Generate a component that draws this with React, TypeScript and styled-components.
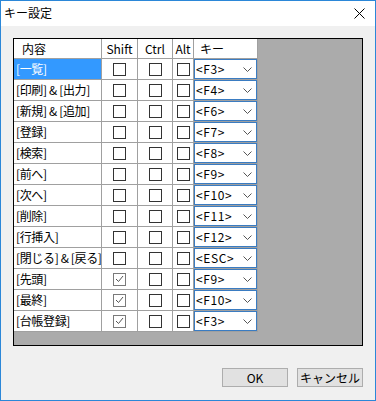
import React from 'react';
import styled, { createGlobalStyle } from 'styled-components';

const GlobalStyle = createGlobalStyle`
  body {
    margin: 0;
    font-family: "Noto Sans CJK JP", "Noto Sans", sans-serif;
    font-size: 12px;
    color: #000;
  }
`;

const Window = styled.div`
  box-sizing: border-box;
  width: 376px;
  height: 401px;
  border: 1px solid #2b87d8;
  background-color: #f0f0f0;
  display: flex;
  flex-direction: column;
`;

const TitleBar = styled.div`
  height: 25px;
  flex-shrink: 0;
  display: flex;
  align-items: center;
  justify-content: space-between;
  padding: 0 10px 0 3px;
  background-color: white;
  .title-text {
    font-size: 12px;
    line-height: 1;
    margin-top: -1px;
  }
  .close-icon {
    display: block;
  }
`;

const Body = styled.div`
  display: flex;
  flex-direction: column;
  padding: 12px 12px 0 12px;
`;

const GridFrame = styled.div`
  box-sizing: border-box;
  height: 308px;
  border: 1px solid #000;
  background-color: #ababab;
`;

const Table = styled.div`
  display: grid;
  grid-template-columns: 88px 36px 35px 21px 64px;
  width: 244px;
`;

const HeaderCell = styled.div<{ $align?: string; $pad?: number }>`
  box-sizing: border-box;
  height: 20px;
  display: flex;
  align-items: center;
  justify-content: ${(p) => p.$align || 'flex-start'};
  padding-left: ${(p) => p.$pad ?? 0}px;
  background-color: white;
  border-right: 1px solid #a0a0a0;
  border-bottom: 1px solid #a0a0a0;
  white-space: nowrap;
  overflow: hidden;
  line-height: 1;
`;

const Cell = styled.div<{ $selected?: boolean; $center?: boolean }>`
  box-sizing: border-box;
  height: 21px;
  display: flex;
  align-items: center;
  justify-content: ${(p) => (p.$center ? 'center' : 'flex-start')};
  padding-left: ${(p) => (p.$center ? 0 : 2)}px;
  background-color: ${(p) => (p.$selected ? '#3399ff' : 'white')};
  color: ${(p) => (p.$selected ? 'white' : '#000')};
  border-right: 1px solid #a0a0a0;
  border-bottom: 1px solid #a0a0a0;
  white-space: nowrap;
  overflow: hidden;
  line-height: 1;
  letter-spacing: -0.35px;
`;

const CheckBox = styled.span<{ $checked?: boolean }>`
  box-sizing: border-box;
  width: 13px;
  height: 13px;
  display: flex;
  align-items: center;
  justify-content: center;
  border: 1px solid ${(p) => (p.$checked ? '#7a7a7a' : '#333')};
  background-color: white;
`;

const Combo = styled.div`
  box-sizing: border-box;
  width: 100%;
  height: 100%;
  display: flex;
  align-items: center;
  justify-content: space-between;
  padding: 0 4px 0 1px;
  border: 1px solid #3a7cc2;
  background-color: white;
  .combo-text {
    letter-spacing: 0.6px;
    line-height: 1;
  }
  .combo-chevron {
    display: block;
  }
`;

const ComboCell = styled.div`
  box-sizing: border-box;
  height: 21px;
  background-color: white;
  border-right: 1px solid #a0a0a0;
  border-bottom: 1px solid #a0a0a0;
`;

const Footer = styled.div`
  display: flex;
  justify-content: flex-end;
  gap: 9px;
  margin-top: 22px;
`;

const Button = styled.button`
  box-sizing: border-box;
  width: 66px;
  height: 19px;
  padding: 0;
  border: 1px solid #adadad;
  background-color: #e1e1e1;
  font-family: "Noto Sans CJK JP", "Noto Sans", sans-serif;
  font-size: 12px;
  line-height: 1;
  color: #000;
`;

type Row = { label: string; key: string; shift?: boolean; selected?: boolean };

const rows: Row[] = [
  { label: '[一覧]', key: '<F3>', selected: true },
  { label: '[印刷] & [出力]', key: '<F4>' },
  { label: '[新規] & [追加]', key: '<F6>' },
  { label: '[登録]', key: '<F7>' },
  { label: '[検索]', key: '<F8>' },
  { label: '[前へ]', key: '<F9>' },
  { label: '[次へ]', key: '<F10>' },
  { label: '[削除]', key: '<F11>' },
  { label: '[行挿入]', key: '<F12>' },
  { label: '[閉じる] & [戻る]', key: '<ESC>' },
  { label: '[先頭]', key: '<F9>', shift: true },
  { label: '[最終]', key: '<F10>', shift: true },
  { label: '[台帳登録]', key: '<F3>', shift: true },
];

const Check = ({ checked }: { checked?: boolean }) => (
  <CheckBox $checked={checked}>
    {checked && (
      <svg width="9" height="8" viewBox="0 0 9 8">
        <polyline points="1,4 3.5,6.5 8,1" fill="none" stroke="#555" strokeWidth="1" />
      </svg>
    )}
  </CheckBox>
);

const App = () => {
  return (
    <>
      <GlobalStyle />
      <Window>
        <TitleBar>
          <span className='title-text'>キー設定</span>
          <svg className='close-icon' width="11" height="11" viewBox="0 0 11 11">
            <path d="M0.5 0.5 L10.5 10.5 M10.5 0.5 L0.5 10.5" stroke="#000" strokeWidth="1" />
          </svg>
        </TitleBar>
        <Body>
          <GridFrame>
            <Table>
              <HeaderCell $pad={8}>内容</HeaderCell>
              <HeaderCell $align='center'>Shift</HeaderCell>
              <HeaderCell $align='center'>Ctrl</HeaderCell>
              <HeaderCell $align='center'>Alt</HeaderCell>
              <HeaderCell $pad={6}>キー</HeaderCell>
              {rows.map((r) => (
                <React.Fragment key={r.label}>
                  <Cell $selected={r.selected}>{r.label}</Cell>
                  <Cell $center><Check checked={r.shift} /></Cell>
                  <Cell $center><Check /></Cell>
                  <Cell $center><Check /></Cell>
                  <ComboCell>
                    <Combo>
                      <span className='combo-text'>{r.key}</span>
                      <svg className='combo-chevron' width="9" height="5" viewBox="0 0 9 5">
                        <polyline points="0.5,0.5 4.5,4.5 8.5,0.5" fill="none" stroke="#555" strokeWidth="1" />
                      </svg>
                    </Combo>
                  </ComboCell>
                </React.Fragment>
              ))}
            </Table>
          </GridFrame>
          <Footer>
            <Button>OK</Button>
            <Button>キャンセル</Button>
          </Footer>
        </Body>
      </Window>
    </>
  );
};

export default App;
